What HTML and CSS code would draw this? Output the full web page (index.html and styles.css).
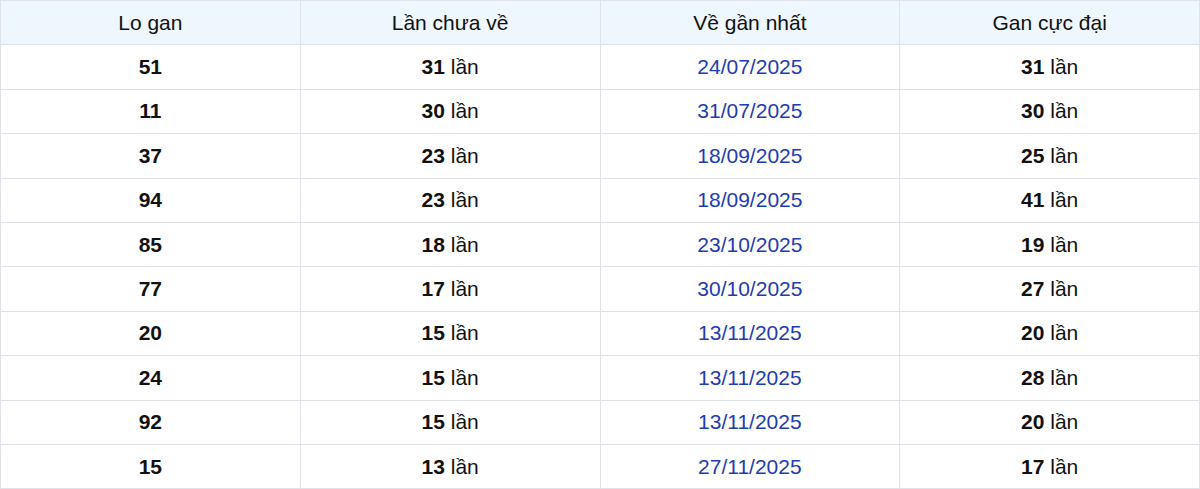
FILE: index.html
```html
<!DOCTYPE html>
<html lang="vi">
<head>
<meta charset="utf-8">
<link rel="stylesheet" href="styles.css">
</head>
<body>
<table class="gan-table">
  <thead>
    <tr><th>Lo gan</th><th>Lần chưa về</th><th>Về gần nhất</th><th>Gan cực đại</th></tr>
  </thead>
  <tbody>
    <tr><td><b>51</b></td><td><b>31</b> lần</td><td class="date">24/07/2025</td><td><b>31</b> lần</td></tr>
    <tr><td><b>11</b></td><td><b>30</b> lần</td><td class="date">31/07/2025</td><td><b>30</b> lần</td></tr>
    <tr><td><b>37</b></td><td><b>23</b> lần</td><td class="date">18/09/2025</td><td><b>25</b> lần</td></tr>
    <tr><td><b>94</b></td><td><b>23</b> lần</td><td class="date">18/09/2025</td><td><b>41</b> lần</td></tr>
    <tr><td><b>85</b></td><td><b>18</b> lần</td><td class="date">23/10/2025</td><td><b>19</b> lần</td></tr>
    <tr><td><b>77</b></td><td><b>17</b> lần</td><td class="date">30/10/2025</td><td><b>27</b> lần</td></tr>
    <tr><td><b>20</b></td><td><b>15</b> lần</td><td class="date">13/11/2025</td><td><b>20</b> lần</td></tr>
    <tr><td><b>24</b></td><td><b>15</b> lần</td><td class="date">13/11/2025</td><td><b>28</b> lần</td></tr>
    <tr><td><b>92</b></td><td><b>15</b> lần</td><td class="date">13/11/2025</td><td><b>20</b> lần</td></tr>
    <tr><td><b>15</b></td><td><b>13</b> lần</td><td class="date">27/11/2025</td><td><b>17</b> lần</td></tr>
  </tbody>
</table>
</body>
</html>
```
FILE: styles.css
```css
html, body {
  margin: 0;
  padding: 0;
  background: #ffffff;
}
.gan-table {
  width: 1200px;
  height: 489px;
  border-collapse: collapse;
  table-layout: fixed;
  font-family: "Liberation Sans", Arial, sans-serif;
  font-size: 21px;
  color: #111111;
}
.gan-table th,
.gan-table td {
  border: 1px solid #dfe2e8;
  text-align: center;
  vertical-align: middle;
  padding: 0;
  height: 43.4px;
}
.gan-table th {
  background: #eef6fe;
  font-weight: normal;
}
.gan-table b {
  font-weight: bold;
}
.gan-table .date {
  color: #1c3cb2;
}
```
